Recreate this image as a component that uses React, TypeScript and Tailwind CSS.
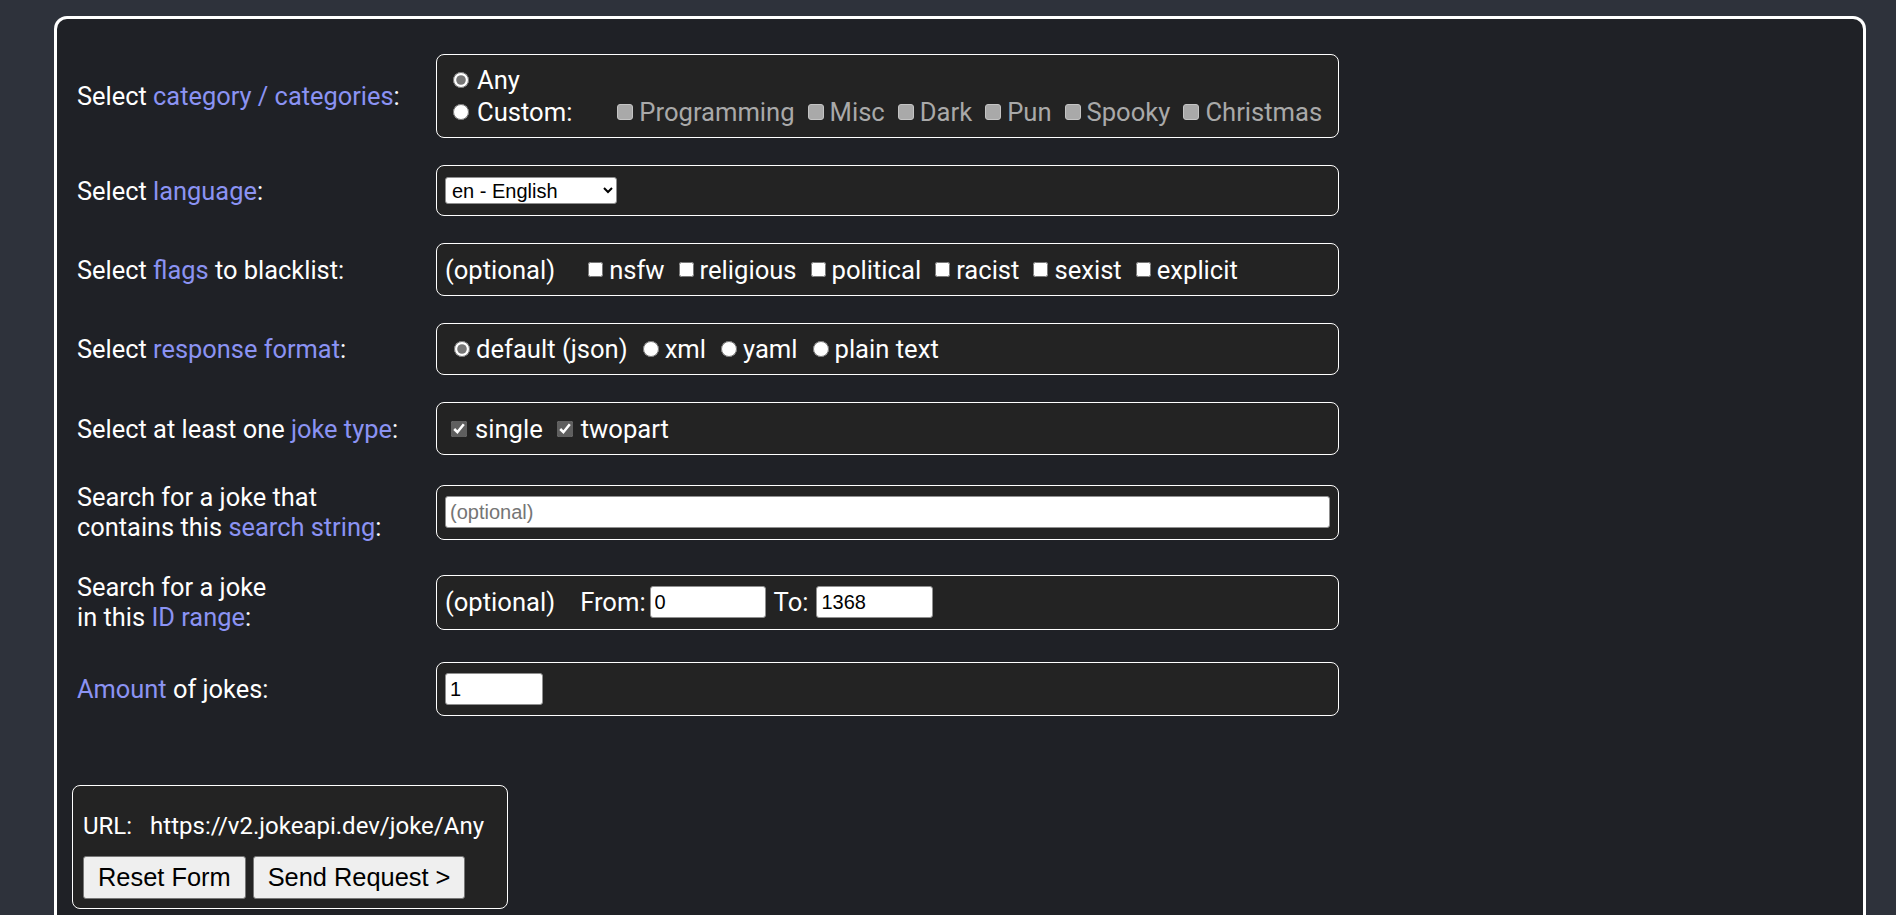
import React from 'react';

const Link = ({ children }: { children: React.ReactNode }) => (
  <span className="text-[#8b93f3]">{children}</span>
);

const Box = ({ children, className = '' }: { children: React.ReactNode; className?: string }) => (
  <div className={`rounded-[8px] border border-white bg-[#232323] px-[8px] py-[10px] text-[25.6px] ${className}`}>{children}</div>
);

const textInput =
  "rounded-[3px] border border-[#8f8f8f] bg-white px-[4px] font-['Liberation_Sans',Arial,sans-serif] text-[20px] text-black outline-none placeholder:text-[#757575]";

const categories = ['Programming', 'Misc', 'Dark', 'Pun', 'Spooky', 'Christmas'];
const flags = ['nsfw', 'religious', 'political', 'racist', 'sexist', 'explicit'];
const formats = ['default (json)', 'xml', 'yaml', 'plain text'];

const App = () => {
  return (
    <div className="h-[915px] overflow-hidden bg-[#2e323b] pt-[16px] pl-[54px] pr-[30px] font-['Roboto',sans-serif] text-white">
      <div className="min-h-[1000px] rounded-t-[13px] border-[3px] border-b-0 border-white bg-[#1f2126] pl-[15px] pt-[35px]">
        {/* Form rows */}
        <div className="ml-[5px] grid grid-cols-[359px_903px] items-center gap-y-[27px] text-[25.4px] leading-[30px]">
          <div>
            Select <Link>category / categories</Link>:
          </div>
          <Box className="flex flex-col gap-[2px]">
            <div className="flex h-[30px] items-center">
              <input type="radio" name="cat" defaultChecked className="ml-[8px] mr-[8px] h-[16px] w-[16px] accent-[#767676]" />
              Any
            </div>
            <div className="flex h-[30px] items-center">
              <input type="radio" name="cat" className="ml-[8px] mr-[8px] h-[16px] w-[16px] accent-[#767676]" />
              Custom:
              <div className="ml-[45px] flex items-center gap-[13px] text-[#a9a9a9]">
                {categories.map((c) => (
                  <span key={c} className="flex items-center gap-[6px]">
                    <span className="h-[16px] w-[16px] rounded-[3px] border border-[#c4c4c4] bg-[#a9a9a9]" />
                    {c}
                  </span>
                ))}
              </div>
            </div>
          </Box>

          <div>
            Select <Link>language</Link>:
          </div>
          <Box className="flex h-[51px] items-center">
            <select className="h-[27px] w-[172px] rounded-[3px] border border-[#8f8f8f] bg-white pl-[2px] font-['Liberation_Sans',Arial,sans-serif] text-[20px] text-black">
              <option>en - English</option>
            </select>
          </Box>

          <div>
            Select <Link>flags</Link> to blacklist:
          </div>
          <Box className="flex h-[53px] items-center">
            (optional)
            <div className="ml-[33px] flex items-center gap-[14px]">
              {flags.map((f) => (
                <span key={f} className="flex items-center gap-[6px]">
                  <input type="checkbox" className="m-0 h-[15px] w-[15px]" />
                  {f}
                </span>
              ))}
            </div>
          </Box>

          <div>
            Select <Link>response format</Link>:
          </div>
          <Box className="flex h-[52px] items-center">
            <div className="ml-[9px] flex items-center gap-[15px]">
              {formats.map((f, i) => (
                <span key={f} className="flex items-center gap-[6px]">
                  <input type="radio" name="fmt" defaultChecked={i === 0} className="m-0 h-[16px] w-[16px] accent-[#767676]" />
                  {f}
                </span>
              ))}
            </div>
          </Box>

          <div>
            Select at least one <Link>joke type</Link>:
          </div>
          <Box className="flex h-[53px] items-center">
            <div className="ml-[6px] flex items-center gap-[14px]">
              {['single', 'twopart'].map((t) => (
                <span key={t} className="flex items-center gap-[8px]">
                  <input type="checkbox" defaultChecked className="m-0 h-[16px] w-[16px] accent-[#5f5f5f]" />
                  {t}
                </span>
              ))}
            </div>
          </Box>

          <div>
            Search for a joke that
            <br />
            contains this <Link>search string</Link>:
          </div>
          <Box className="flex h-[55px] items-center">
            <input type="text" placeholder="(optional)" className={`h-[32px] w-full ${textInput}`} />
          </Box>

          <div className="mt-[3px]">
            Search for a joke
            <br />
            in this <Link>ID range</Link>:
          </div>
          <Box className="mt-[3px] flex h-[55px] items-center">
            (optional)
            <span className="ml-[25px]">From:</span>
            <input type="text" defaultValue="0" className={`ml-[4px] h-[32px] w-[116px] ${textInput}`} />
            <span className="ml-[8px]">To:</span>
            <input type="text" defaultValue="1368" className={`ml-[8px] h-[32px] w-[117px] ${textInput}`} />
          </Box>

          <div className="mt-[3px]">
            <Link>Amount</Link> of jokes:
          </div>
          <Box className="mt-[3px] flex h-[54px] items-center">
            <input type="text" defaultValue="1" className={`h-[32px] w-[98px] ${textInput}`} />
          </Box>
        </div>

        {/* Request URL and actions */}
        <div className="mt-[69px] w-[436px] rounded-[8px] border border-white bg-[#232323] pb-[9px] pl-[10px] pt-[26px]">
          <div className="flex text-[24px] leading-[28px]">
            <span>URL:</span>
            <span className="ml-[18px]">https://v2.jokeapi.dev/joke/Any</span>
          </div>
          <div className="mt-[16px] flex gap-[7px] font-['Liberation_Sans',Arial,sans-serif] text-[25.4px] text-black">
            <button className="rounded-[3px] border border-[#767676] bg-[#efefef] px-[14px] py-[6px] leading-[29px]">Reset Form</button>
            <button className="rounded-[3px] border border-[#767676] bg-[#efefef] px-[14px] py-[6px] leading-[29px]">Send Request &gt;</button>
          </div>
        </div>
      </div>
    </div>
  );
};

export default App;
